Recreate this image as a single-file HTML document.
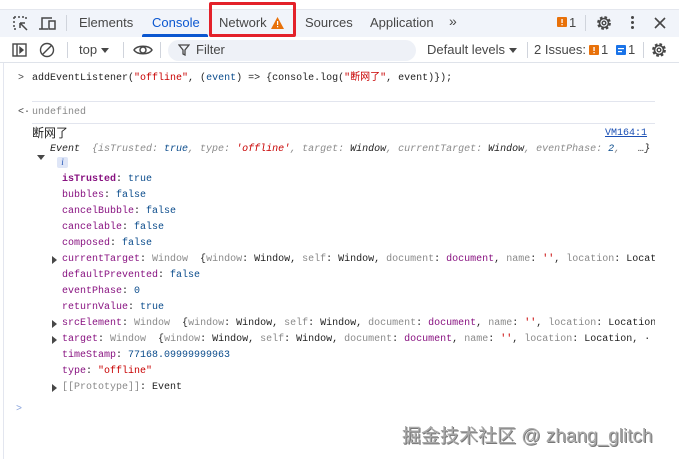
<!DOCTYPE html>
<html><head><meta charset="utf-8"><style>
*{margin:0;padding:0;box-sizing:border-box}
body{width:679px;height:459px;overflow:hidden;background:#fff;position:relative;font-family:"Liberation Sans","Noto Sans CJK SC",sans-serif;color:#1f1f1f}
.a{position:absolute;white-space:nowrap}
.ui{font-size:13px;color:#474747}
.m{font-family:"Liberation Mono","Noto Sans CJK SC",monospace;font-size:10px;line-height:16px;color:#1f1f1f}
.k{color:#881280}
.kb{color:#881280;font-weight:bold}
.b{color:#0b4c8c}
.s{color:#c80000}
.g{color:#8a8a8a}
.i{font-style:italic}
.tri{position:absolute;width:0;height:0;border-top:4px solid transparent;border-bottom:4px solid transparent;border-left:5px solid #474747}
</style></head><body>
<div class="a" style="left:0;top:9px;width:679px;height:28px;background:#f1f4fa;border-top:1px solid #e4e7ee"></div>
<div class="a" style="left:0;top:62px;width:679px;height:1px;background:#dfe3ea"></div>
<div class="a" style="left:3px;top:63px;width:1px;height:396px;background:#e3e6ef"></div>
<svg class="a" style="left:12px;top:15px" width="20" height="18" viewBox="0 0 20 18" fill="none" stroke="#474747" stroke-width="1.5"><path d="M2 2v12h4M2 2h12v4" stroke-dasharray="2 2"/><path d="M8 8l7 7M8 8h5M8 8v5"/></svg>
<svg class="a" style="left:38px;top:15px" width="20" height="18" viewBox="0 0 20 18" fill="none" stroke="#474747" stroke-width="1.5"><path d="M4 14V3h10M1 14h9"/><rect x="11" y="6" width="6" height="8"/></svg>
<div class="a" style="left:66px;top:15px;width:1px;height:16px;background:#d0d4dc"></div>
<div class="a ui" style="left:79px;top:15px">Elements</div>
<div class="a ui" style="left:152px;top:15px;color:#0b57d0">Console</div>
<div class="a" style="left:142px;top:34px;width:66px;height:3px;background:#0b57d0;border-radius:2px 2px 0 0"></div>
<div class="a ui" style="left:219px;top:15px">Network</div>
<svg class="a" style="left:271px;top:17px" width="13" height="12" viewBox="0 0 13 12"><path d="M6.5 0L13 12H0z" fill="#e8710a"/><rect x="6" y="4" width="1.2" height="4" fill="#fff"/><rect x="6" y="9" width="1.2" height="1.3" fill="#fff"/></svg>
<div class="a" style="left:209px;top:2px;width:87px;height:35px;border:3px solid #e3212a;border-radius:2px"></div>
<div class="a ui" style="left:305px;top:15px">Sources</div>
<div class="a ui" style="left:370px;top:15px">Application</div>
<div class="a ui" style="left:449px;top:13px;font-size:14px">»</div>
<svg class="a" style="left:557px;top:17px" width="10" height="10"><rect width="10" height="10" rx="1" fill="#e8710a"/><rect x="4.4" y="2" width="1.3" height="4" fill="#fff"/><rect x="4.4" y="7" width="1.3" height="1.3" fill="#fff"/></svg>
<div class="a ui" style="left:569px;top:15px">1</div>
<div class="a" style="left:585px;top:15px;width:1px;height:16px;background:#d0d4dc"></div>
<svg class="a" style="left:596px;top:15px" width="16" height="16" viewBox="0 0 16 16"><circle cx="8" cy="8" r="5.3" fill="none" stroke="#474747" stroke-width="3.2" stroke-dasharray="2.4 1.8"/><circle cx="8" cy="8" r="4.5" fill="none" stroke="#474747" stroke-width="1.6"/><circle cx="8" cy="8" r="1.8" fill="none" stroke="#474747" stroke-width="1.4"/></svg>
<div class="a" style="left:631px;top:16px;width:3px;height:3px;background:#474747;border-radius:50%;box-shadow:0 5px 0 #474747,0 10px 0 #474747"></div>
<svg class="a" style="left:654px;top:17px" width="12" height="12"><path d="M1 1l10 10M11 1L1 11" stroke="#474747" stroke-width="1.6"/></svg>
<svg class="a" style="left:12px;top:43px" width="16" height="14" viewBox="0 0 16 14" fill="none" stroke="#474747" stroke-width="1.4"><rect x="1" y="1" width="13" height="12"/><path d="M5 1v12"/><path d="M8 4.5l3 2.5-3 2.5z" fill="#474747"/></svg>
<svg class="a" style="left:39px;top:42px" width="16" height="16"><circle cx="8" cy="8" r="6.5" fill="none" stroke="#474747" stroke-width="1.4"/><path d="M3.5 12.5l9-9" stroke="#474747" stroke-width="1.4"/></svg>
<div class="a" style="left:67px;top:42px;width:1px;height:16px;background:#d0d4dc"></div>
<div class="a ui" style="left:79px;top:42px">top</div>
<div class="a" style="left:101px;top:48px;border-left:4px solid transparent;border-right:4px solid transparent;border-top:5px solid #474747"></div>
<div class="a" style="left:123px;top:42px;width:1px;height:16px;background:#d0d4dc"></div>
<svg class="a" style="left:133px;top:43px" width="20" height="14" viewBox="0 0 20 14"><path d="M1 7C4 2 16 2 19 7C16 12 4 12 1 7z" fill="none" stroke="#474747" stroke-width="1.5"/><circle cx="10" cy="7" r="3" fill="none" stroke="#474747" stroke-width="1.5"/></svg>
<div class="a" style="left:160px;top:42px;width:1px;height:16px;background:#d0d4dc"></div>
<div class="a" style="left:168px;top:40px;width:248px;height:21px;background:#eef1f7;border-radius:11px"></div>
<svg class="a" style="left:178px;top:44px" width="12" height="12" viewBox="0 0 12 12"><path d="M1 1h10L7 6v5L5 10V6z" fill="none" stroke="#474747" stroke-width="1.3"/></svg>
<div class="a ui" style="left:196px;top:42px">Filter</div>
<div class="a ui" style="left:427px;top:42px">Default levels</div>
<div class="a" style="left:509px;top:48px;border-left:4px solid transparent;border-right:4px solid transparent;border-top:5px solid #474747"></div>
<div class="a" style="left:527px;top:42px;width:1px;height:16px;background:#d0d4dc"></div>
<div class="a ui" style="left:534px;top:42px">2 Issues:</div>
<svg class="a" style="left:589px;top:45px" width="10" height="10"><rect width="10" height="10" rx="1" fill="#e8710a"/><rect x="4.4" y="2" width="1.3" height="4" fill="#fff"/><rect x="4.4" y="7" width="1.3" height="1.3" fill="#fff"/></svg>
<div class="a ui" style="left:601px;top:42px">1</div>
<svg class="a" style="left:616px;top:45px" width="10" height="10"><rect width="10" height="10" rx="1" fill="#1a73e8"/><rect x="2" y="3" width="6" height="1.2" fill="#fff"/><rect x="2" y="6" width="4" height="1.2" fill="#fff"/></svg>
<div class="a ui" style="left:628px;top:42px">1</div>
<div class="a" style="left:643px;top:42px;width:1px;height:16px;background:#d0d4dc"></div>
<svg class="a" style="left:651px;top:42px" width="16" height="16" viewBox="0 0 16 16"><circle cx="8" cy="8" r="5.3" fill="none" stroke="#474747" stroke-width="3.2" stroke-dasharray="2.4 1.8"/><circle cx="8" cy="8" r="4.5" fill="none" stroke="#474747" stroke-width="1.6"/><circle cx="8" cy="8" r="1.8" fill="none" stroke="#474747" stroke-width="1.4"/></svg>
<div style="position:absolute;left:0;top:0;width:655px;height:459px;overflow:hidden">
<div class="a m" style="left:18px;top:71px;color:#474747">&gt;</div>
<div class="a m" style="left:32px;top:71px">addEventListener(<span class="s">"offline"</span>, (<span class="b">event</span>) =&gt; {console.log(<span class="s">"断网了"</span>, event)});</div>
<div class="a" style="left:32px;top:101px;width:623px;height:1px;background:#e2e5ee"></div>
<div class="a m" style="left:18px;top:105px;color:#474747">&lt;·</div>
<div class="a m g" style="left:32px;top:105px">undefined</div>
<div class="a" style="left:32px;top:123px;width:623px;height:1px;background:#e2e5ee"></div>
<div class="a m" style="left:32px;top:126px;font-size:12px">断网了</div>
<div class="a m" style="left:605px;top:126px;color:#1a4fb4;text-decoration:underline">VM164:1</div>
<div class="a" style="left:37px;top:155px;border-left:4px solid transparent;border-right:4px solid transparent;border-top:5px solid #474747"></div>
<div class="a m i" style="left:50px;top:142px">Event&nbsp; <span class="g">{isTrusted: </span><span class="b">true</span><span class="g">, type: </span><span class="s">'offline'</span><span class="g">, target: </span>Window<span class="g">, currentTarget: </span>Window<span class="g">, eventPhase: </span><span class="b">2</span><span class="g">,</span>&nbsp;&nbsp; …}</div>
<div class="a" style="left:57px;top:157px;width:11px;height:11px;background:#dfe6f7;border-radius:2px;font:italic 9px 'Liberation Serif',serif;color:#1a4fb4;text-align:center;line-height:11px">i</div>
<div class="a m" style="left:62px;top:172px"><span class="kb">isTrusted</span>: <span class="b">true</span></div>
<div class="a m" style="left:62px;top:188px"><span class="k">bubbles</span>: <span class="b">false</span></div>
<div class="a m" style="left:62px;top:204px"><span class="k">cancelBubble</span>: <span class="b">false</span></div>
<div class="a m" style="left:62px;top:220px"><span class="k">cancelable</span>: <span class="b">false</span></div>
<div class="a m" style="left:62px;top:236px"><span class="k">composed</span>: <span class="b">false</span></div>
<div class="tri" style="left:52px;top:256px"></div>
<div class="a m" style="left:62px;top:252px"><span class="k">currentTarget</span>: <span class="g">Window</span>&nbsp; {<span class="g">window</span>: Window, <span class="g">self</span>: Window, <span class="g">document</span>: <span class="k">document</span>, <span class="g">name</span>: <span class="s">''</span>, <span class="g">location</span>: Location, …}</div>
<div class="a m" style="left:62px;top:268px"><span class="k">defaultPrevented</span>: <span class="b">false</span></div>
<div class="a m" style="left:62px;top:284px"><span class="k">eventPhase</span>: <span class="b">0</span></div>
<div class="a m" style="left:62px;top:300px"><span class="k">returnValue</span>: <span class="b">true</span></div>
<div class="tri" style="left:52px;top:320px"></div>
<div class="a m" style="left:62px;top:316px"><span class="k">srcElement</span>: <span class="g">Window</span>&nbsp; {<span class="g">window</span>: Window, <span class="g">self</span>: Window, <span class="g">document</span>: <span class="k">document</span>, <span class="g">name</span>: <span class="s">''</span>, <span class="g">location</span>: Location, …}</div>
<div class="tri" style="left:52px;top:336px"></div>
<div class="a m" style="left:62px;top:332px"><span class="k">target</span>: <span class="g">Window</span>&nbsp; {<span class="g">window</span>: Window, <span class="g">self</span>: Window, <span class="g">document</span>: <span class="k">document</span>, <span class="g">name</span>: <span class="s">''</span>, <span class="g">location</span>: Location, ·</div>
<div class="a m" style="left:62px;top:348px"><span class="k">timeStamp</span>: <span class="b">77168.09999999963</span></div>
<div class="a m" style="left:62px;top:364px"><span class="k">type</span>: <span class="s">"offline"</span></div>
<div class="tri" style="left:52px;top:384px"></div>
<div class="a m" style="left:62px;top:380px"><span class="g">[[Prototype]]</span>: Event</div>
<div class="a m" style="left:16px;top:402px;color:#8aa4dc">&gt;</div>
</div>
<div class="a" style="left:402px;top:421px;font-size:19px;color:#a8a8a8;text-shadow:1px 1px 0 #777;font-family:'Liberation Sans','Noto Sans CJK SC',sans-serif">掘金技术社区 @ zhang_glitch</div>
</body></html>
